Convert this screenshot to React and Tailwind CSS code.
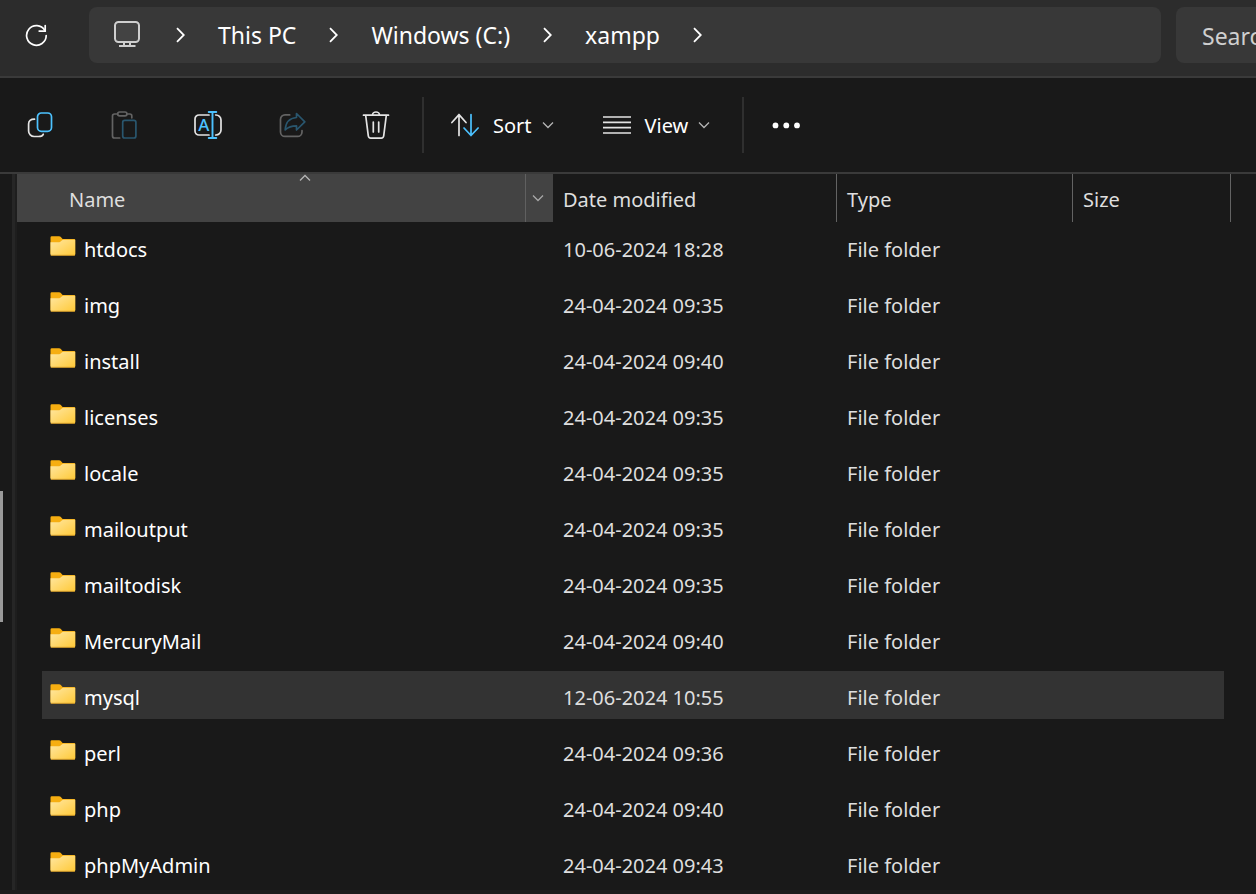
import { useState } from 'react';

const folders = [
  { name: 'htdocs', modified: '10-06-2024 18:28' },
  { name: 'img', modified: '24-04-2024 09:35' },
  { name: 'install', modified: '24-04-2024 09:40' },
  { name: 'licenses', modified: '24-04-2024 09:35' },
  { name: 'locale', modified: '24-04-2024 09:35' },
  { name: 'mailoutput', modified: '24-04-2024 09:35' },
  { name: 'mailtodisk', modified: '24-04-2024 09:35' },
  { name: 'MercuryMail', modified: '24-04-2024 09:40' },
  { name: 'mysql', modified: '12-06-2024 10:55' },
  { name: 'perl', modified: '24-04-2024 09:36' },
  { name: 'php', modified: '24-04-2024 09:40' },
  { name: 'phpMyAdmin', modified: '24-04-2024 09:43' },
];

const crumbs = ['This PC', 'Windows (C:)', 'xampp'];

const Icon = ({ children }) => (
  <svg width="28" height="28" viewBox="0 0 28 28" fill="none" strokeWidth="1.7" strokeLinecap="round" strokeLinejoin="round" className="shrink-0" aria-hidden="true">
    {children}
  </svg>
);

const RefreshIcon = () => (
  <svg width="24" height="24" viewBox="0 0 24 24" fill="none" stroke="#fff" strokeWidth="1.7" strokeLinecap="round" aria-hidden="true">
    <path d="M22.200 12.500A9.800 9.800 0 1 1 20.800 7.400" />
    <path d="M21.200 2.500v5.600h-6" />
  </svg>
);

const MonitorIcon = () => (
  <svg width="28" height="28" viewBox="0 0 28 28" fill="none" stroke="#cfcfcf" strokeWidth="2" className="mr-0.5 shrink-0" aria-hidden="true">
    <rect x="2" y="1" width="24" height="20" rx="3.5" fill="#434343" />
    <path d="M11 21v4M17 21v4M6 25h16.500" />
  </svg>
);

const CrumbArrow = () => (
  <svg width="9" height="16" viewBox="0 0 9 16" fill="none" stroke="#fff" strokeWidth="1.8" className="shrink-0" aria-hidden="true">
    <path d="M1 1.200 7.800 8 1 14.800" />
  </svg>
);

const ChevronDown = ({ color }) => (
  <svg width="12" height="8" viewBox="0 0 12 8" fill="none" stroke={color} strokeWidth="1.3" className="shrink-0" aria-hidden="true">
    <path d="M1 1.500 6 6.500 11 1.500" />
  </svg>
);

const CopyIcon = () => (
  <Icon>
    <path d="M8.500 8.200C4.600 8.200 2.600 9.800 2.600 13v7a5.500 5.500 0 0 0 5.500 5.500h4.400c2.800 0 4.300-.8 4.800-2.300" stroke="#e4e4e4" />
    <rect x="11.500" y="2" width="14" height="18.300" rx="3.800" stroke="#4cc2ff" />
  </Icon>
);

const PasteIcon = () => (
  <Icon>
    <path d="M7.500 3H4.500a2 2 0 0 0-2 2v20a2 2 0 0 0 2 2h5.200M17 3h2.800a2 2 0 0 1 2 2v1.800" stroke="#636363" />
    <rect x="7.700" y="1" width="9.200" height="3.900" rx="1.900" stroke="#636363" />
    <rect x="12.700" y="9.400" width="13.200" height="17.600" rx="2" stroke="#29566e" />
  </Icon>
);

const RenameIcon = () => (
  <Icon>
    <path d="M15 4H5a4 4 0 0 0-4 4v12a4 4 0 0 0 4 4h10M21.700 4a5 5 0 0 1 5.300 5v10a5 5 0 0 1-5.300 5" stroke="#e4e4e4" />
    <path d="M18.500 1v26M14.700 1h7.600M14.700 27h7.600" stroke="#4cc2ff" strokeWidth="1.900" />
    <text x="9.700" y="19.500" textAnchor="middle" fill="#4cc2ff" fontFamily="Noto Sans, sans-serif" fontSize="17" fontWeight="500">A</text>
  </Icon>
);

const ShareIcon = () => (
  <Icon>
    <path d="M11.700 3.900H7A4.500 4.500 0 0 0 2.500 8.400v12.500A4.500 4.500 0 0 0 7 25.400h12.500a4.500 4.500 0 0 0 4.500-4.500v-1.400" stroke="#636363" />
    <path d="M18.500 2.500 26.800 10.800 18.500 19v-4.200c-5 0-8 .9-11.300 4 .4-6.800 4.100-11.700 11.300-12.300z" stroke="#29566e" />
  </Icon>
);

const TrashIcon = () => (
  <Icon>
    <path d="M1.500 4.200h25M10.500 4.200a3.500 3.200 0 0 1 7 0M3.700 4.500 6.300 24.800a2.500 2.500 0 0 0 2.500 2.300h10.400a2.500 2.500 0 0 0 2.500-2.300L24.300 4.500M11.300 11v10M16.700 11v10" stroke="#e4e4e4" />
  </Icon>
);

const SortIcon = () => (
  <Icon>
    <path d="M8 24.500V3.600M.9 11.500 8 3.600 15 11.500" stroke="#e4e4e4" />
    <path d="M20 3.600v20.900M13 17l7 7.500 7.100-7.500" stroke="#4cc2ff" />
  </Icon>
);

const ViewIcon = () => (
  <Icon>
    <path d="M0 6h28M0 11.300h28M0 16.700h28M0 22h28" stroke="#e4e4e4" strokeLinecap="butt" />
  </Icon>
);

const MoreIcon = () => (
  <Icon>
    <circle cx="3.500" cy="14.400" r="2.900" fill="#fff" />
    <circle cx="14.300" cy="14.400" r="2.900" fill="#fff" />
    <circle cx="25" cy="14.400" r="2.900" fill="#fff" />
  </Icon>
);

const FolderIcon = () => (
  <svg width="26" height="20" viewBox="0 0 26 20" className="shrink-0" aria-hidden="true">
    <defs>
      <linearGradient id="folder" x1="0" y1="0" x2="1" y2="1">
        <stop offset="0" stopColor="#ffe7a2" />
        <stop offset="1" stopColor="#ffc937" />
      </linearGradient>
    </defs>
    <path d="M.5 1.500q0-1.300 1.300-1.300h7.400q.8 0 1.400.6l2 2.200h11.600q1 0 1 1V18H.5z" fill="#f6ae11" />
    <path d="M.5 6.200h8.700q.8 0 1.400-.6l1.500-1.400q.4-.4 1.100-.4h12v14.700q0 1-1 1H1.500q-1 0-1-1z" fill="url(#folder)" />
    <path d="M.8 19.300h24.100" stroke="#d79a25" strokeWidth=".8" />
  </svg>
);

const tools = [
  { label: 'Copy', icon: <CopyIcon /> },
  { label: 'Paste', icon: <PasteIcon />, disabled: true },
  { label: 'Rename', icon: <RenameIcon /> },
  { label: 'Share', icon: <ShareIcon />, disabled: true },
  { label: 'Delete', icon: <TrashIcon /> },
];

const AddressBar = () => (
  <header className="flex items-start h-[78px] pt-[7px] bg-[#2c2c2c] border-b-2 border-[#3a3a3a] shrink-0">
    <button aria-label="Refresh" className="flex items-center justify-center w-[72px] h-14 shrink-0">
      <RefreshIcon />
    </button>
    <nav aria-label="Breadcrumb" className="flex flex-1 items-center gap-[33px] h-14 ml-[17px] pl-6 rounded-lg bg-[#383838] text-[23px] leading-8 text-white whitespace-nowrap overflow-hidden">
      <MonitorIcon />
      <CrumbArrow />
      {crumbs.map((crumb) => (
        <span key={crumb} className="flex items-center gap-[33px]">
          <a href="#">{crumb}</a>
          <CrumbArrow />
        </span>
      ))}
    </nav>
    <input
      type="text"
      aria-label="Search xampp"
      placeholder="Search xampp"
      className="w-20 h-14 ml-[15px] pt-0.5 pl-[26px] rounded-l-lg bg-[#383838] text-[23px] text-white placeholder:text-[#cfcfcf] outline-none shrink-0"
    />
  </header>
);

const Toolbar = () => (
  <div role="toolbar" className="flex items-center h-24 bg-[#191919] border-b-2 border-[#3a3a3a] text-xl text-white shrink-0">
    <div className="flex gap-7 pl-3">
      {tools.map((tool) => (
        <button key={tool.label} aria-label={tool.label} disabled={tool.disabled} className="flex items-center justify-center w-14 h-14">
          {tool.icon}
        </button>
      ))}
    </div>
    <div className="w-0.5 h-14 ml-[18px] bg-[#2f2f2f]" />
    <button className="flex items-center gap-2.5 h-14 pl-[27px] pr-[25px]">
      <SortIcon />
      <span className="pt-0.5 pl-1">Sort</span>
      <ChevronDown color="#b5b5b5" />
    </button>
    <button className="flex items-center gap-2.5 h-14 pl-6 pr-8">
      <ViewIcon />
      <span className="pt-0.5 pl-1">View</span>
      <ChevronDown color="#b5b5b5" />
    </button>
    <div className="w-0.5 h-14 bg-[#2f2f2f]" />
    <button aria-label="See more" className="flex items-center h-14 px-7">
      <MoreIcon />
    </button>
  </div>
);

const Explorer = () => {
  const [selected, setSelected] = useState('mysql');

  const cell = (name) =>
    `h-14 p-0 border-t border-b-7 border-transparent bg-clip-padding ${selected === name ? 'bg-[#333333]' : ''}`;

  return (
    <div className="flex flex-col h-screen overflow-hidden bg-[#191919] font-['Noto_Sans',sans-serif]">
      <AddressBar />
      <Toolbar />
      <main className="flex flex-1 min-h-0 overflow-hidden">
        <div className="flex flex-col w-3 shrink-0">
          <div className="grow-[317]" />
          <div className="w-[3px] grow-[131] bg-[#9a9a9a]" />
          <div className="grow-[268]" />
        </div>
        <div className="w-[5px] border-l-3 border-[#262626] bg-[#1e1e1e] shrink-0" />
        <div className="flex-1 min-w-0 overflow-hidden">
          <table className="w-full table-fixed border-separate border-spacing-0 text-left text-xl leading-7 text-[#dedede]">
            <colgroup>
              <col className="w-[536px]" />
              <col className="w-[284px]" />
              <col className="w-[236px]" />
              <col className="w-[158px]" />
              <col />
            </colgroup>
            <thead>
              <tr>
                <th className="h-12 p-0 font-normal bg-[#434343]">
                  <div className="relative flex h-12">
                    <button className="flex-1 pt-1 pl-[52px] text-left border-r border-[#606060]">Name</button>
                    <button aria-label="Filter by name" className="flex items-center justify-center w-[27px] pr-1">
                      <ChevronDown color="#a8a8a8" />
                    </button>
                    <span className="absolute top-0 left-[282px] rotate-180">
                      <ChevronDown color="#b5b5b5" />
                    </span>
                  </div>
                </th>
                <th className="h-12 pt-1 pb-0 px-2.5 font-normal border-r border-[#636363]">Date modified</th>
                <th className="h-12 pt-1 pb-0 px-2.5 font-normal border-r border-[#636363]">Type</th>
                <th className="h-12 pt-1 pb-0 px-2.5 font-normal border-r border-[#636363]">Size</th>
                <td />
              </tr>
            </thead>
            <tbody>
              {folders.map((folder) => (
                <tr key={folder.name} onClick={() => setSelected(folder.name)}>
                  <td className={`${cell(folder.name)} border-l-25`}>
                    <div className="flex items-center gap-2 pb-0.5 pl-2 text-white">
                      <FolderIcon />
                      <span className="pt-2">{folder.name}</span>
                    </div>
                  </td>
                  <td className={cell(folder.name)}>
                    <div className="pt-1.5 px-2.5">{folder.modified}</div>
                  </td>
                  <td className={cell(folder.name)}>
                    <div className="pt-1.5 px-2.5">File folder</div>
                  </td>
                  <td className={`${cell(folder.name)} border-r-7`} />
                  <td />
                </tr>
              ))}
            </tbody>
          </table>
        </div>
      </main>
      <footer className="h-1 bg-[#1f1c1e] shrink-0" />
    </div>
  );
};

export default Explorer;
